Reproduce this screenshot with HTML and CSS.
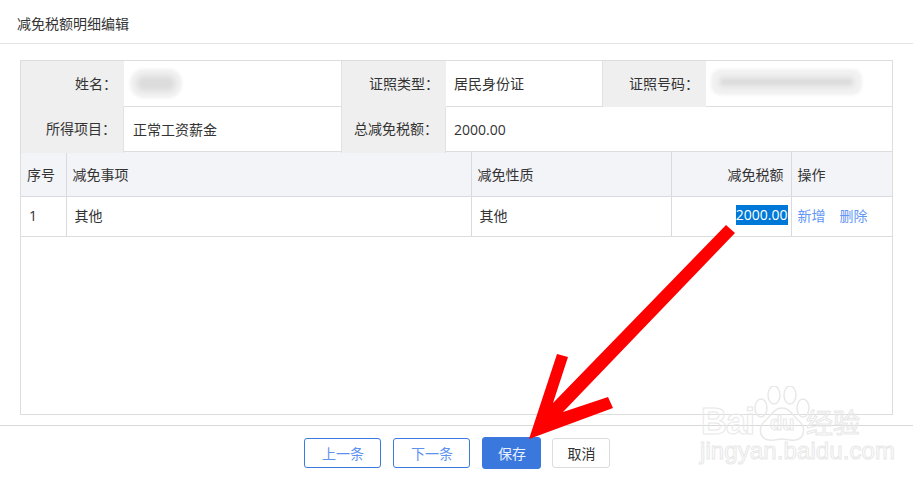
FILE: index.html
```html
<!DOCTYPE html>
<html lang="zh-CN">
<head>
<meta charset="utf-8">
<title>减免税额明细编辑</title>
<link rel="stylesheet" href="styles.css">
</head>
<body>
<div class="page">
  <header class="title">减免税额明细编辑</header>
  <main class="main">
    <div class="panel">
      <div class="info info-top">
        <div class="label">姓名：</div>
        <div class="value"><span class="blur blur-name"></span></div>
        <div class="label">证照类型：</div>
        <div class="value">居民身份证</div>
        <div class="label">证照号码：</div>
        <div class="value value-last"><span class="blur blur-id"></span></div>
      </div>
      <div class="info info-second">
        <div class="label">所得项目：</div>
        <div class="value value-wide">正常工资薪金</div>
        <div class="label">总减免税额：</div>
        <div class="value value-last">2000.00</div>
      </div>
      <table class="grid">
        <colgroup>
          <col class="c1"><col class="c2"><col class="c3"><col class="c4"><col class="c5">
        </colgroup>
        <thead>
          <tr>
            <th>序号</th>
            <th>减免事项</th>
            <th>减免性质</th>
            <th class="right">减免税额</th>
            <th>操作</th>
          </tr>
        </thead>
        <tbody>
          <tr>
            <td>1</td>
            <td class="indent">其他</td>
            <td class="indent">其他</td>
            <td class="amount"><span class="selected">2000.00</span></td>
            <td><a class="link">新增</a><a class="link link-gap">删除</a></td>
          </tr>
        </tbody>
      </table>
    </div>
  </main>
  <footer class="footer">
    <button class="btn btn-outline">上一条</button>
    <button class="btn btn-outline">下一条</button>
    <button class="btn btn-primary">保存</button>
    <button class="btn btn-plain">取消</button>
  </footer>
</div>

<svg class="arrow" width="913" height="481" viewBox="0 0 913 481" aria-hidden="true">
  <polygon fill="#ff0000" points="726,225 735,233 563,412 608,397 613,408 529,439 557,354 568,357 553,403"/>
</svg>

<div class="mark" aria-hidden="true">
  <span class="mark-bai">Bai</span>
  <svg class="mark-paw" width="56" height="60" viewBox="0 0 56 60">
    <g fill="none" stroke="#e8e8e8" stroke-width="1.5">
      <ellipse cx="7" cy="22" rx="6" ry="9"/>
      <ellipse cx="20" cy="9" rx="6" ry="9"/>
      <ellipse cx="36" cy="9" rx="6" ry="9"/>
      <ellipse cx="49" cy="22" rx="6" ry="9"/>
      <path d="M28 22C20 22 17 30 11 35C4 41 5 53 15 54C21 55 24 53 28 53C32 53 36 55 41 54C51 53 52 41 45 35C39 30 36 22 28 22Z"/>
    </g>
  </svg>
  <span class="mark-du">du</span>
  <span class="mark-cn">经验</span>
  <span class="mark-url">jingyan.baidu.com</span>
</div>
</body>
</html>
```
FILE: styles.css
```css
* { box-sizing: border-box; }
html, body { margin: 0; padding: 0; background: #fff; }
body {
  width: 913px;
  height: 481px;
  overflow: hidden;
  position: relative;
  font-family: "Open Sans", "Noto Sans CJK SC", sans-serif;
  font-size: 14px;
  color: #333;
}
.title {
  height: 44px;
  padding: 15px 0 0 17px;
  font-size: 14px;
  line-height: 18px;
  border-bottom: 1px solid #e4e4e4;
}
.main { padding: 16px 20px 0; }
.panel {
  width: 873px;
  height: 355px;
  border: 1px solid #ddd;
}
.info { display: grid; border-bottom: 1px solid #ddd; }
.info-top {
  height: 46px;
  grid-template-columns: 103px 218px 104px 157px 103px 1fr;
}
.info-second {
  height: 45px;
  grid-template-columns: 103px 218px 104px 1fr;
}
.label {
  background: #efefef;
  text-align: right;
  line-height: 44px;
  padding-right: 7px;
  border-right: 1px solid #e2e2e2;
}
.info-top .label { border-right: 0; line-height: 46px; }
.value {
  line-height: 46px;
  padding-left: 8px;
  border-right: 1px solid #e2e2e2;
  white-space: nowrap;
}
.value-wide { padding-left: 9px; }
.value-last { border-right: 0; }
.blur {
  display: block;
  background: #dcdcdc;
  filter: blur(1.5px);
}
.blur-name {
  width: 34px;
  height: 11px;
  margin: 17px 0 0 7px;
  border-radius: 6px;
  box-shadow: 0 0 0 4px #e6e6e6, 0 0 0 9px #f0f0f0;
}
.blur-id {
  width: 131px;
  height: 6px;
  margin: 18px 0 0 7px;
  border-radius: 3px;
  box-shadow: 0 0 0 4px #e9e9e9, 0 0 0 10px #f1f1f1;
}

.grid {
  width: 871px;
  border-collapse: collapse;
  table-layout: fixed;
}
.c1 { width: 45px; }
.c2 { width: 405px; }
.c3 { width: 200px; }
.c4 { width: 120px; }
.grid th {
  height: 44px;
  background: #f3f4f8;
  font-weight: 400;
  text-align: left;
  padding: 0 6px;
  border-right: 1px solid #d9d9e0;
  border-bottom: 1px solid #d9d9e0;
}
.grid th.right { text-align: right; padding-right: 7px; }
.grid td {
  height: 40px;
  padding: 0 8px 2px;
  border-right: 1px solid #d9d9e0;
  border-bottom: 1px solid #dcdcdc;
}
.grid th:last-child, .grid td:last-child { border-right: 0; padding-left: 6px; }
.grid td:first-child { padding-left: 8px; }
.amount { text-align: right; padding-right: 3px !important; }
.selected {
  display: inline-block;
  background: #0078d7;
  color: #fff;
  line-height: 20px;
  font-size: 14px;
}
.link { color: #6497f5; }
.link-gap { margin-left: 14px; }

.footer {
  margin-top: 10px;
  border-top: 1px solid #d9d9d9;
  display: flex;
  justify-content: flex-start;
  gap: 12px;
  padding: 12px 0 0 304px;
}
.btn {
  width: 77px;
  height: 30px;
  padding: 0 0 0 1px;
  margin: 0;
  font: inherit;
  border-radius: 3px;
  background: #fff;
  cursor: pointer;
}
.btn-outline { border: 1px solid #3b7ae0; color: #5d92ee; }
.btn-primary {
  width: 59px;
  height: 32px;
  margin-top: -1px;
  background: #3a78de;
  border: 1px solid #3a78de;
  color: #eaf1fd;
}
.btn-plain {
  width: 58px;
  margin-left: -1px;
  border: 1px solid #dcdcdc;
  color: #333;
}
.arrow { position: absolute; left: 0; top: 0; pointer-events: none; }

.mark { position: absolute; left: 0; top: 0; width: 913px; height: 481px; pointer-events: none; }
.mark span {
  position: absolute;
  color: transparent;
  -webkit-text-stroke: 1px #e8e8e8;
  white-space: nowrap;
  font-family: "Liberation Sans", sans-serif;
}
.mark-bai { left: 701px; top: 404px; font-size: 36px; line-height: 36px; font-weight: 700; letter-spacing: -1px; }
.mark-paw { position: absolute; left: 754px; top: 386px; }
.mark-du { left: 770px; top: 412px; font-size: 20px; line-height: 22px; font-weight: 700; }
.mark .mark-cn { left: 806px; top: 407px; font-size: 27px; line-height: 30px; font-family: "Noto Sans CJK SC", sans-serif; }
.mark-url { left: 700px; top: 441px; font-size: 24px; line-height: 20px; letter-spacing: 0.1px; }
```
